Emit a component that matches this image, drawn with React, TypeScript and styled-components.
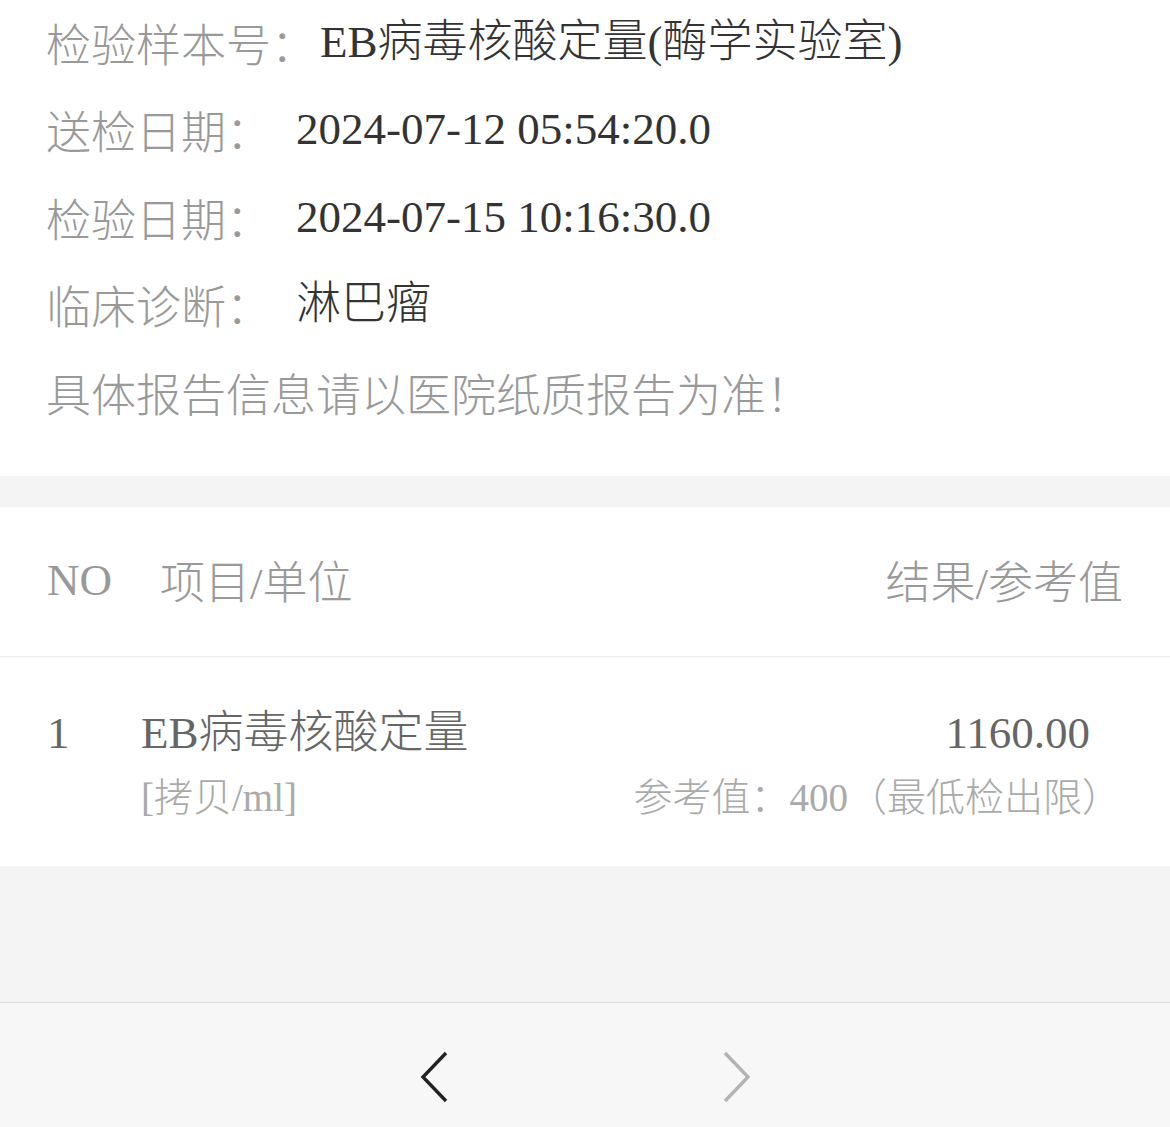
import React from "react";
import styled, { createGlobalStyle } from "styled-components";

const colors = {
	label: "#999999",
	value: "#333333",
	item: "#666666",
	faint: "#aaaaaa",
	band: "#f4f4f4",
	bar: "#f7f7f7",
};

const info = [
	{ label: "检验样本号：", value: "EB病毒核酸定量(酶学实验室)" },
	{ label: "送检日期：", value: "2024-07-12 05:54:20.0" },
	{ label: "检验日期：", value: "2024-07-15 10:16:30.0" },
	{ label: "临床诊断：", value: "淋巴瘤" },
];

const results = [
	{
		no: "1",
		name: "EB病毒核酸定量",
		unit: "[拷贝/ml]",
		result: "1160.00",
		reference: "参考值：400（最低检出限）",
	},
];

export default function App() {
	return (
		<>
			<GlobalStyle />
			<Page>
				<InfoSection>
					{info.map((row) => (
						<InfoRow key={row.label}>
							<Label>{row.label}</Label>
							<Value>{row.value}</Value>
						</InfoRow>
					))}
					<Notice>具体报告信息请以医院纸质报告为准！</Notice>
				</InfoSection>
				<Band />
				<Table>
					<HeaderRow>
						<HeaderNo>NO</HeaderNo>
						<HeaderCell>项目/单位</HeaderCell>
						<HeaderRight>结果/参考值</HeaderRight>
					</HeaderRow>
					{results.map((r) => (
						<ResultRow key={r.no}>
							<RowNo>{r.no}</RowNo>
							<ItemCol>
								<ItemName>{r.name}</ItemName>
								<Unit>{r.unit}</Unit>
							</ItemCol>
							<ResultCol>
								<ResultValue>{r.result}</ResultValue>
								<Reference>{r.reference}</Reference>
							</ResultCol>
						</ResultRow>
					))}
				</Table>
				<Filler />
				<NavBar>
					<NavButton aria-label="上一页">
						<Chevron $dir="left" $active />
					</NavButton>
					<NavButton aria-label="下一页">
						<Chevron $dir="right" />
					</NavButton>
				</NavBar>
			</Page>
		</>
	);
}

function Chevron({ $dir, $active }: { $dir: "left" | "right"; $active?: boolean }) {
	const d = $dir === "left" ? "M26 2 L3 26 L26 50" : "M2 2 L25 26 L2 50";
	return (
		<svg width="28" height="52" viewBox="0 0 28 52" fill="none">
			<path
				d={d}
				stroke={$active ? "#222222" : "#b3b3b3"}
				strokeWidth="3.4"
				strokeLinejoin="miter"
			/>
		</svg>
	);
}

const GlobalStyle = createGlobalStyle`
	html, body {
		margin: 0;
		padding: 0;
		background: #ffffff;
		overflow: hidden;
	}
	body {
		font-family: "Liberation Serif", "Noto Sans CJK SC", serif;
		font-weight: 300;
		-webkit-font-smoothing: antialiased;
	}
`;

const Page = styled.div`
	width: 1170px;
	display: flex;
	flex-direction: column;
`;

const InfoSection = styled.section`
	margin-top: -1.5px;
	padding: 0 46px 40px 46px;
	font-size: 45px;
	line-height: 87.5px;
`;

const InfoRow = styled.div`
	display: flex;
	white-space: nowrap;
`;

const Label = styled.span`
	min-width: 246px;
	color: ${colors.label};
	font-family: "Noto Sans CJK SC", sans-serif;
`;

const Value = styled.span`
	margin-left: 4px;
	color: ${colors.value};
`;

const Notice = styled.div`
	color: ${colors.label};
	font-family: "Noto Sans CJK SC", sans-serif;
`;

const Band = styled.div`
	height: 31px;
	background: ${colors.band};
`;

const Table = styled.section`
	background: #ffffff;
`;

const HeaderRow = styled.div`
	display: flex;
	align-items: center;
	height: 150px;
	padding: 0 49px 4px 47px;
	box-sizing: border-box;
	border-bottom: 1px solid #eeeeee;
	font-size: 45px;
	color: ${colors.label};
`;

const HeaderNo = styled.span`
	width: 113px;
`;

const HeaderCell = styled.span`
	flex: 1;
`;

const HeaderRight = styled.span`
	margin-right: -2px;
	text-align: right;
`;

const ResultRow = styled.div`
	display: flex;
	padding: 46px 49px 33px 47px;
`;

const RowNo = styled.div`
	width: 94px;
	font-size: 45px;
	line-height: 60px;
	color: ${colors.item};
`;

const ItemCol = styled.div`
	flex: 1;
	display: flex;
	flex-direction: column;
`;

const ItemName = styled.div`
	font-size: 45px;
	line-height: 60px;
	color: ${colors.item};
`;

const Unit = styled.div`
	font-size: 39px;
	line-height: 70px;
	color: ${colors.faint};
`;

const ResultCol = styled.div`
	display: flex;
	flex-direction: column;
	align-items: flex-end;
`;

const ResultValue = styled.div`
	padding-right: 31px;
	font-size: 45px;
	line-height: 60px;
	color: ${colors.item};
`;

const Reference = styled.div`
	font-size: 39px;
	line-height: 70px;
	color: ${colors.faint};
`;

const Filler = styled.div`
	height: 136px;
	background: ${colors.band};
`;

const NavBar = styled.nav`
	display: flex;
	justify-content: center;
	align-items: center;
	height: 147px;
	border-top: 1px solid #dddddd;
	background: ${colors.bar};
`;

const NavButton = styled.button`
	width: 303px;
	height: 100%;
	display: flex;
	align-items: center;
	justify-content: center;
	padding: 0;
	border: none;
	background: transparent;
	cursor: pointer;
`;
